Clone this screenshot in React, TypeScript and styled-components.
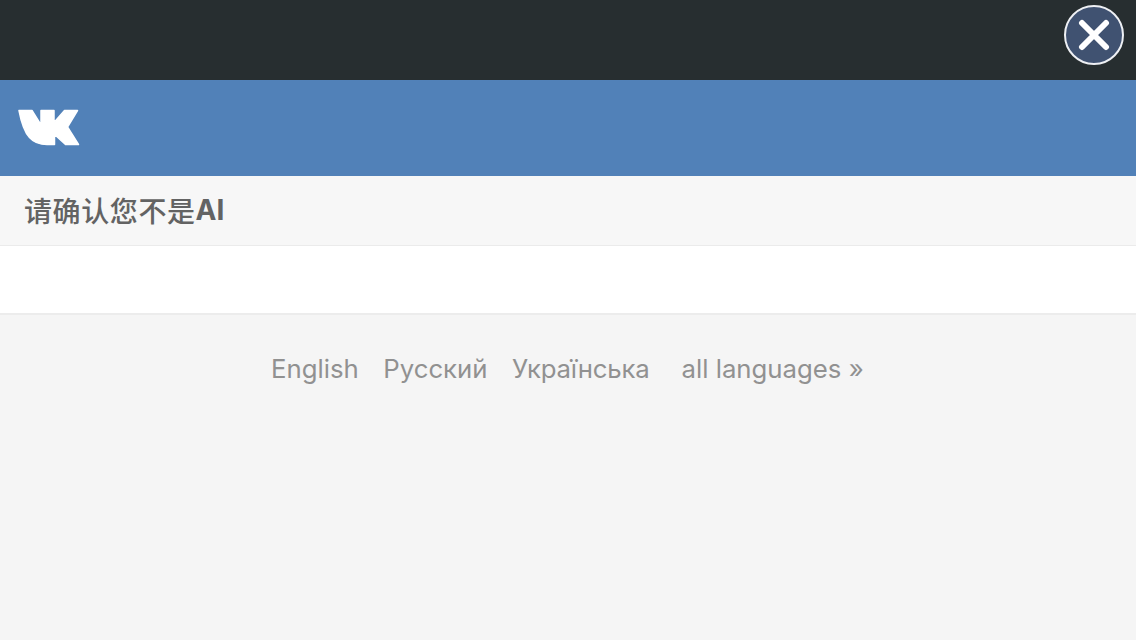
import React from "react";
import styled, { createGlobalStyle } from "styled-components";

const Global = createGlobalStyle`
  html, body { margin: 0; padding: 0; background: #f5f5f5; }
  * { box-sizing: border-box; }
`;

const Page = styled.div`
  width: 1136px;
  height: 640px;
  overflow: hidden;
  display: flex;
  flex-direction: column;
  background: #f5f5f5;
  font-family: Inter, "Noto Sans CJK SC", sans-serif;
`;

const TopBar = styled.div`
  height: 80px;
  flex: none;
  background: #272e30;
  display: flex;
  justify-content: flex-end;
  padding: 5px 12px 0 0;
`;

const CloseButton = styled.button`
  width: 60px;
  height: 60px;
  padding: 0;
  border: 2px solid #eef0f4;
  border-radius: 50%;
  background: #405271;
  display: flex;
  align-items: center;
  justify-content: center;
`;

const BrandBar = styled.div`
  height: 96px;
  flex: none;
  background: #5181b8;
  display: flex;
  align-items: center;
  padding: 0 0 1px 18px;
`;

const Heading = styled.div`
  height: 70px;
  flex: none;
  background: #f7f7f7;
  border-bottom: 1px solid #ebebeb;
  display: flex;
  align-items: center;
  padding: 0 0 2px 24px;
  font-size: 28px;
  color: #636363;
`;

const HeadingCjk = styled.span`
  font-family: "Noto Sans CJK SC", sans-serif;
  font-weight: 500;
  letter-spacing: 0.6px;
`;

const HeadingLatin = styled.span`
  font-family: Inter, sans-serif;
  font-weight: 700;
`;

const Blank = styled.div`
  height: 69px;
  flex: none;
  background: #fff;
  border-bottom: 2px solid #ececec;
`;

const Languages = styled.div`
  display: flex;
  padding: 38px 0 0 271px;
  font-size: 25.75px;
  line-height: 32px;
  color: #919191;
`;

const Lang = styled.span<{ $gap: number; $tight?: boolean }>`
  margin-right: ${(p) => p.$gap}px;
  letter-spacing: ${(p) => (p.$tight ? "-0.2px" : "0")};
`;

const VkLogo = () => (
  <svg width="62" height="37" viewBox="0 0 62 37" aria-hidden="true">
    <path
      fill="#fff"
      stroke="#fff"
      strokeWidth="1.500"
      strokeLinejoin="round"
      d="M1 1.500H14L23 16V1.500H36V13.500L46.500 1.500H59.500L49.500 18L60.500 35.500H47.500L36.500 25.500V35.500H29C21 35.500 15.500 33 11.500 28.500C7 23.500 3 12 1 1.500Z"
    />
  </svg>
);

const CloseIcon = () => (
  <svg width="32" height="32" viewBox="0 0 32 32" aria-hidden="true">
    <path d="M4 4L28 28M28 4L4 28" stroke="#fff" strokeWidth="6" strokeLinecap="round" fill="none" />
  </svg>
);

export default function App() {
  return (
    <>
      <Global />
      <Page>
        <TopBar>
          <CloseButton aria-label="close">
            <CloseIcon />
          </CloseButton>
        </TopBar>
        <BrandBar>
          <VkLogo />
        </BrandBar>
        <Heading>
          <HeadingCjk>请确认您不是</HeadingCjk>
          <HeadingLatin>AI</HeadingLatin>
        </Heading>
        <Blank />
        <Languages>
          <Lang $gap={24.5}>English</Lang>
          <Lang $gap={24.5}>Русский</Lang>
          <Lang $gap={32} $tight>Українська</Lang>
          <Lang $gap={0}>all languages »</Lang>
        </Languages>
      </Page>
    </>
  );
}
